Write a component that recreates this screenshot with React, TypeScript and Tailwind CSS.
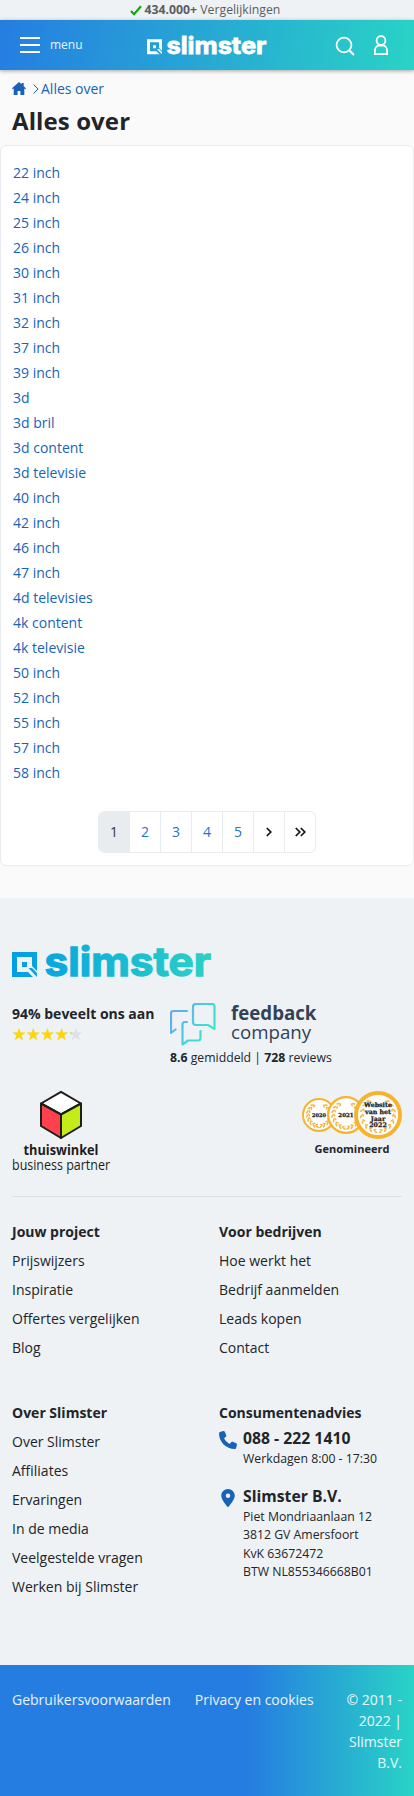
import React from "react";

const topics = [
  "22 inch", "24 inch", "25 inch", "26 inch", "30 inch", "31 inch", "32 inch", "37 inch", "39 inch",
  "3d", "3d bril", "3d content", "3d televisie", "40 inch", "42 inch", "46 inch", "47 inch",
  "4d televisies", "4k content", "4k televisie", "50 inch", "52 inch", "55 inch", "57 inch", "58 inch",
];

const STAR = "M7 0.4 L8.65 5 L13.5 5.1 L9.65 8 L11.1 12.7 L7 9.9 L2.9 12.7 L4.35 8 L0.5 5.1 L5.35 5 Z";

function Logo({ id, from, to, className }: { id: string; from: string; to: string; className: string }) {
  return (
    <svg viewBox="0 0 200 33" className={className} aria-label="slimster">
      <defs>
        <linearGradient id={id} gradientUnits="userSpaceOnUse" x1="0" y1="0" x2="200" y2="0">
          <stop offset="0" stopColor={from} />
          <stop offset="1" stopColor={to} />
        </linearGradient>
      </defs>
      <g fill={`url(#${id})`}>
        <path fillRule="evenodd" d="M0 7H25V26L20 21V12H5V27H16L21 32H0Z M10 17H15V22H10Z" />
        <path d="M16.5 23H20L25 28V32Z" />
        <text
          x="32.5" y="31.3" textLength="166.5" lengthAdjust="spacingAndGlyphs"
          stroke={`url(#${id})`} strokeWidth="1.3"
          className="font-['Inter',sans-serif] text-[39.5px] font-bold"
        >slimster</text>
      </g>
    </svg>
  );
}

function Stars() {
  return (
    <svg viewBox="0 0 70 14" className="block h-[14px] w-[70px]">
      <defs><clipPath id="rated"><rect width="60" height="14" /></clipPath></defs>
      {[0, 1, 2, 3, 4].map((i) => <path key={i} d={STAR} transform={`translate(${i * 14.2} 0.5)`} fill="#dee2e6" />)}
      <g clipPath="url(#rated)">
        {[0, 1, 2, 3, 4].map((i) => <path key={i} d={STAR} transform={`translate(${i * 14.2} 0.5)`} fill="#ffd60a" />)}
      </g>
    </svg>
  );
}

function Links({ title, items }: { title: string; items: string[] }) {
  return (
    <div className="leading-[29px]">
      <div className="font-bold">{title}</div>
      {items.map((t) => <a key={t} href="#" className="block whitespace-nowrap">{t}</a>)}
    </div>
  );
}

function Medal({ x, y, r, w, size, lines }: { x: number; y: number; r: number; w: number; size: number; lines: string[] }) {
  const leaves = [-55, -35, -15, 5, 25, 45, 65, 82];
  const lr = r - w - 3;
  return (
    <g>
      <circle cx={x} cy={y} r={r - w / 2} fill="#fff" stroke="#f7b32e" strokeWidth={w} />
      {[1, -1].map((s) => (
        <g key={s} transform={`translate(${x} ${y}) scale(${s} 1)`} fill="#f5b84a">
          {leaves.map((a) => (
            <g key={a} transform={`rotate(${a}) translate(${lr} 0)`}>
              <ellipse rx="0.9" ry="2" transform="rotate(-30)" />
              <ellipse cx="-2.3" rx="0.8" ry="1.8" transform="rotate(28)" />
            </g>
          ))}
        </g>
      ))}
      {lines.map((l, i) => (
        <text
          key={l} x={x} y={y + size * 0.36 + (i - (lines.length - 1) / 2) * 6.6} textAnchor="middle"
          fontSize={size} fill="#1d1d1b" stroke="#1d1d1b" strokeWidth="0.25"
          className="font-['DejaVu_Serif',serif] font-bold"
        >{l}</text>
      ))}
    </g>
  );
}

export default function App() {
  return (
    <div className="flex h-[1796px] w-full flex-col bg-[#fafafa] font-['Open_Sans',sans-serif] text-[14px] leading-[21px] text-[#212529]">
      <div className="flex h-5 shrink-0 items-center justify-center bg-[#eef2f5] pr-1 text-[12.25px] leading-5 text-[#5a5e61]">
        <svg viewBox="0 0 12 11" className="mr-[3px] h-[11px] w-3"><path d="M1 6.1 4 9.2 11 1.2" fill="none" stroke="#10a80c" strokeWidth="2.2" /></svg>
        <span><b>434.000+</b> Vergelijkingen</span>
      </div>

      <header className="grid h-[50px] shrink-0 grid-cols-[147px_120px_1fr] items-center bg-[linear-gradient(100deg,#257de1_0%,#29d3c6_100%)] text-white shadow-[0_1px_4px_rgba(0,0,0,0.35)]">
        <div className="flex items-center pl-5">
          <svg viewBox="0 0 20 16" className="h-4 w-5"><path d="M0 1H20M0 8H20M0 15H20" stroke="white" strokeWidth="2" /></svg>
          <span className="mb-px ml-[10px] text-[12px] text-white/90">menu</span>
        </div>
        <Logo id="logo-light" from="#ffffff" to="#ffffff" className="mb-px h-5 w-[120px] overflow-visible" />
        <div className="flex justify-end gap-[18px] pr-[25px]">
          <svg viewBox="0 0 20 20" className="mt-[1px] h-5 w-5" fill="none" stroke="white" strokeWidth="1.8"><circle cx="9" cy="9" r="7.4" /><path d="M14.2 14.2 19 19" strokeWidth="2" /></svg>
          <svg viewBox="0 0 16 20" className="h-5 w-4" fill="none" stroke="white" strokeWidth="1.8"><circle cx="8" cy="5.4" r="4.4" /><path d="M1.9 19.1V15.5C1.9 12.500 4.200 10.800 5.500 10.500H10.500C11.800 10.800 14.100 12.500 14.100 15.500V19.100Z" /></svg>
        </div>
      </header>

      <nav className="mt-2 flex h-[21px] shrink-0 items-center pl-3 text-[#1863b8]">
        <svg viewBox="0 0 14 13" className="h-[13px] w-[14px]" fill="currentColor"><path d="M7 0 9.5 2.2V1H11.7V4.2L14 6.3 13.2 7.2 12.3 6.6V13H8.4V9H5.6V13H1.7V6.6L.8 7.2 0 6.3Z" /></svg>
        <svg viewBox="0 0 6 10" className="ml-[7px] h-[10px] w-[6px]" fill="none" stroke="currentColor"><path d="M.5.5 5 5 .5 9.5" /></svg>
        <a href="#" className="ml-[2px]">Alles over</a>
      </nav>
      <h1 className="mt-[6px] h-10 shrink-0 pl-3 text-[24px] leading-[32px] font-bold tracking-[0.1px]">Alles over</h1>

      <main className="flex h-[721px] shrink-0 flex-col rounded-[6px] border border-[#e9ecef] bg-white">
        <ul className="mt-[14px] pl-3 leading-[25px] text-[#1863b8]">
          {topics.map((t) => <li key={t}><a href="#">{t}</a></li>)}
        </ul>
        <div className="mx-auto mt-[26px] flex h-[42px] w-[218px] divide-x divide-[#e9ecef] overflow-hidden rounded-[6px] border border-[#e9ecef] text-[#2871c9]">
          <span className="flex flex-1 items-center justify-center bg-[#e9ecef] pb-px text-[#33383c]">1</span>
          {["2", "3", "4", "5"].map((n) => <a key={n} href="#" className="flex flex-1 items-center justify-center pb-px">{n}</a>)}
          <a href="#" className="flex flex-1 items-center justify-center"><svg viewBox="0 0 6 10" className="h-[10px] w-[6px]" fill="none" stroke="#111" strokeWidth="1.7"><path d="M.8 1 4.8 5 .8 9" /></svg></a>
          <a href="#" className="flex flex-1 items-center justify-center"><svg viewBox="0 0 11 10" className="h-[10px] w-[11px]" fill="none" stroke="#111" strokeWidth="1.7"><path d="M.8 1 4.8 5 .8 9M5.8 1 9.8 5 5.8 9" /></svg></a>
        </div>
      </main>

      <footer className="mt-8 flex h-[767px] shrink-0 flex-col bg-[#eef2f5] px-3">
        <Logo id="logo-color" from="#009fe3" to="#2cd1c4" className="mt-[47px] h-[33px] w-[200px] shrink-0 overflow-visible" />
        <div className="mt-[24px] flex h-[66px] shrink-0">
          <div className="w-[158px] whitespace-nowrap">
            <div className="mt-[1px] font-bold">94% beveelt ons aan</div>
            <div className="mt-[3px]"><Stars /></div>
          </div>
          <div>
            <div className="mt-px flex">
              <svg viewBox="0 0 46 43" className="h-[43px] w-[46px]" fill="none" stroke="url(#bubble)" strokeWidth="2.2" strokeLinecap="round" strokeLinejoin="round">
                <defs><linearGradient id="bubble" gradientUnits="userSpaceOnUse" x1="0" y1="10" x2="40" y2="38"><stop stopColor="#62a8f5" /><stop offset="1" stopColor="#35efcb" /></linearGradient></defs>
                <path d="M17 8H3.5Q1 8 1 10.500V30L5.500 26.500" />
                <path d="M26 1H42Q44.500 1 44.500 3.500V26L38 22H26Q23 22 23 19V4Q23 1 26 1Z" />
                <path d="M17 19H15Q12.500 19 12.500 21.500V41.500L18 37.500H28Q30.500 37.500 30.500 35V28" />
              </svg>
              <div className="ml-[15px] flex flex-col pt-px leading-[18.5px] text-[#334155]">
                <span className="text-[18.7px] font-bold">feedback</span>
                <span className="text-[18.7px]">company</span>
              </div>
            </div>
            <div className="mt-[3px] text-[12.25px] leading-[18px] whitespace-nowrap"><b>8.6</b> gemiddeld | <b>728</b> reviews</div>
          </div>
        </div>

        <div className="mt-[23px] flex h-[80px] shrink-0 justify-between">
          <svg viewBox="0 0 99 80" className="h-20 w-[99px] overflow-visible" fill="#1d1d1b">
            <g stroke="#1d1d1b" strokeWidth="2" strokeLinejoin="round">
              <path d="M49 .8 69 12.500 49 23.500 29 12.500Z" fill="#fff" /><path d="M29 12.500 49 23.500V47L29 35Z" fill="#ff414d" /><path d="M49 23.500 69 12.500V35L49 47Z" fill="#c4ec18" />
            </g>
            <text x="11.500" y="64" textLength="75" lengthAdjust="spacingAndGlyphs" className="text-[13.5px] font-bold">thuiswinkel</text>
            <text x="0" y="78.500" textLength="98" lengthAdjust="spacingAndGlyphs" className="text-[14px]">business partner</text>
          </svg>
          <div className="w-[100px]">
            <svg viewBox="0 0 100 49" className="h-[49px] w-[100px]">
              <Medal x={17} y={24} r={17} w={2} size={5} lines={["2020"]} />
              <Medal x={44} y={24} r={19} w={2.3} size={5.5} lines={["2021"]} />
              <Medal x={76} y={24} r={24} w={4} size={6.3} lines={["Website", "van het", "Jaar", "2022"]} />
            </svg>
            <div className="text-center text-[11px] leading-[18px] font-bold">Genomineerd</div>
          </div>
        </div>

        <div className="mt-[25px] h-px shrink-0 bg-[#dde1e5]" />
        <div className="mt-[20px] grid grid-cols-2 gap-y-[36px]">
          <Links title="Jouw project" items={["Prijswijzers", "Inspiratie", "Offertes vergelijken", "Blog"]} />
          <div className="pl-3"><Links title="Voor bedrijven" items={["Hoe werkt het", "Bedrijf aanmelden", "Leads kopen", "Contact"]} /></div>
          <Links title="Over Slimster" items={["Over Slimster", "Affiliates", "Ervaringen", "In de media", "Veelgestelde vragen", "Werken bij Slimster"]} />
          <div className="pl-3">
            <div className="leading-[29px] font-bold">Consumentenadvies</div>
            <div className="flex">
              <svg viewBox="0 0 512 512" className="mt-[4px] h-[18px] w-[18px]" fill="#1863b8"><path d="M164.900 24.600c-7.700-18.600-28-28.500-47.400-23.200l-88 24C12.100 30.200 0 46 0 64 0 311.400 200.600 512 448 512c18 0 33.800-12.100 38.600-29.500l24-88c5.300-19.400-4.600-39.700-23.200-47.400l-96-40c-16.300-6.800-35.200-2.100-46.300 11.600L304.700 368C234.300 334.700 177.300 277.700 144 207.300L193.300 167c13.700-11.200 18.400-30 11.600-46.300z" /></svg>
              <div className="ml-[6px] whitespace-nowrap">
                <div className="text-[15.75px] leading-[23px] font-bold">088 - 222 1410</div>
                <div className="text-[12.25px] leading-[18px]">Werkdagen 8:00 - 17:30</div>
              </div>
            </div>
            <div className="mt-[17px] flex">
              <svg viewBox="0 0 384 512" className="mx-[2px] mt-[4px] h-[18px] w-[14px]" fill="#1863b8"><path fillRule="evenodd" d="M215.700 499.200C267 435 384 279.400 384 192 384 86 298 0 192 0S0 86 0 192c0 87.400 117 243 168.300 307.200 12.300 15.300 35.100 15.300 47.400 0zM192 128a64 64 0 1 1 0 128 64 64 0 0 1 0-128z" /></svg>
              <div className="ml-[6px] whitespace-nowrap">
                <div className="text-[15.75px] leading-[23px] font-bold">Slimster B.V.</div>
                <div className="text-[12.25px] leading-[18.375px]">Piet Mondriaanlaan 12<br />3812 GV Amersfoort<br />KvK 63672472<br />BTW NL855346668B01</div>
              </div>
            </div>
          </div>
        </div>
      </footer>

      <div className="flex h-[131px] shrink-0 bg-[linear-gradient(90deg,#257de1_0%,#257de1_60%,#29d3c6_100%)] px-3 pt-[24px] text-white/90">
        <a href="#" className="mr-6 whitespace-nowrap">Gebruikersvoorwaarden</a>
        <a href="#" className="whitespace-nowrap">Privacy en cookies</a>
        <div className="ml-auto w-[58px] text-right">© 2011 - 2022 | Slimster B.V.</div>
      </div>
    </div>
  );
}
